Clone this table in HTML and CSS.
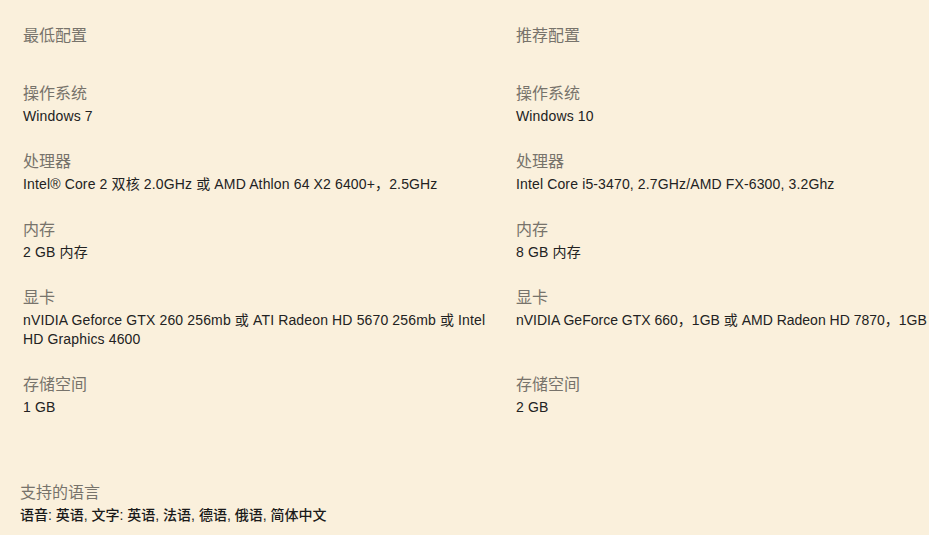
FILE: index.html
```html
<!DOCTYPE html>
<html lang="zh-CN">
<head>
<meta charset="utf-8">
<title>系统需求</title>
<link rel="stylesheet" href="styles.css">
</head>
<body>
<div class="page">
  <div class="specs">
    <div class="title">最低配置</div>
    <div class="title">推荐配置</div>

    <div class="item"><div class="label">操作系统</div><div class="value">Windows 7</div></div>
    <div class="item"><div class="label">操作系统</div><div class="value">Windows 10</div></div>

    <div class="item"><div class="label">处理器</div><div class="value">Intel® Core 2 双核 2.0GHz 或 AMD Athlon 64 X2 6400+，2.5GHz</div></div>
    <div class="item"><div class="label">处理器</div><div class="value">Intel Core i5-3470, 2.7GHz/AMD FX-6300, 3.2Ghz</div></div>

    <div class="item"><div class="label">内存</div><div class="value">2 GB 内存</div></div>
    <div class="item"><div class="label">内存</div><div class="value">8 GB 内存</div></div>

    <div class="item"><div class="label">显卡</div><div class="value">nVIDIA Geforce GTX 260 256mb 或 ATI Radeon HD 5670 256mb 或 Intel HD Graphics 4600</div></div>
    <div class="item"><div class="label">显卡</div><div class="value tight">nVIDIA GeForce GTX 660，1GB 或 AMD Radeon HD 7870，1GB</div></div>

    <div class="item"><div class="label">存储空间</div><div class="value">1 GB</div></div>
    <div class="item"><div class="label">存储空间</div><div class="value">2 GB</div></div>
  </div>

  <div class="languages">
    <div class="label">支持的语言</div>
    <div class="value">语音: 英语, 文字: 英语, 法语, 德语, 俄语, 简体中文</div>
  </div>
</div>
</body>
</html>
```

FILE: styles.css
```css
html, body {
  margin: 0;
  padding: 0;
  background: #faf0dc;
  overflow: hidden;
}

.page {
  width: 929px;
  height: 535px;
  overflow: hidden;
  font-family: "Liberation Sans", "Noto Sans CJK SC", sans-serif;
}

.specs {
  display: grid;
  grid-template-columns: 470px minmax(0, 1fr);
  column-gap: 23px;
  row-gap: 25px;
  padding: 25px 0 0 23px;
}

.title {
  font-size: 16px;
  line-height: 22px;
  color: #77736b;
  margin-bottom: 11px;
}

.label {
  font-size: 16px;
  line-height: 22px;
  color: #77736b;
  margin-bottom: 2px;
}

.value {
  font-size: 14px;
  line-height: 19px;
  color: #222222;
  letter-spacing: 0.14px;
}

.tight {
  white-space: nowrap;
  letter-spacing: 0;
}

.languages {
  padding: 65px 0 0 20px;
}

.languages .value {
  font-weight: 500;
  color: #1a1a1a;
  letter-spacing: 0;
}
```
